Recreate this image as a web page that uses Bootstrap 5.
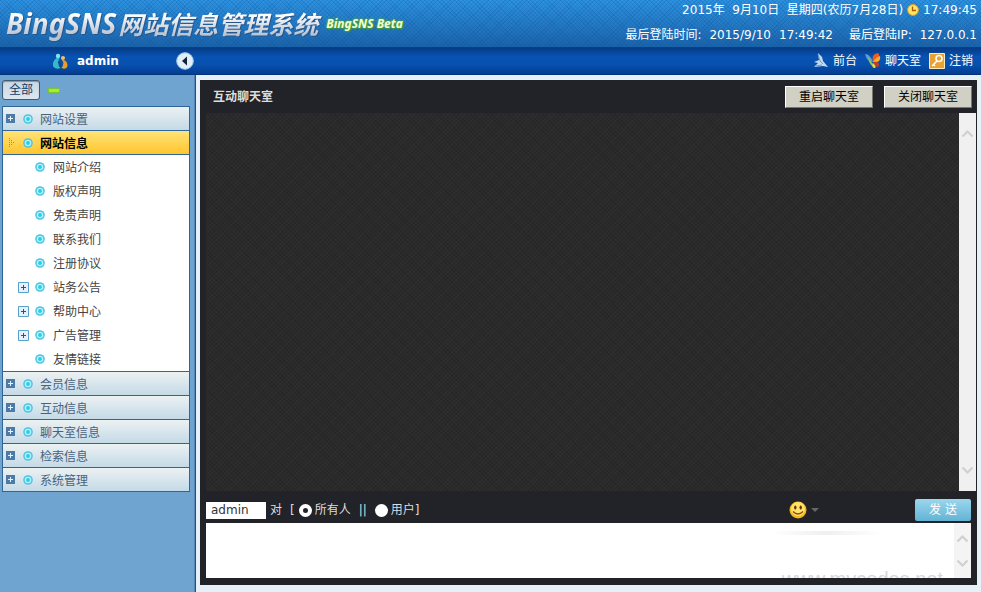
<!DOCTYPE html>
<html lang="zh-CN">
<head>
<meta charset="utf-8">
<meta name="viewport" content="width=device-width, initial-scale=1">
<title>BingSNS网站信息管理系统</title>
<link href="https://cdn.jsdelivr.net/npm/bootstrap@5.3.0/dist/css/bootstrap.min.css" rel="stylesheet">
<style>
body{font:12px/24px "DejaVu Sans","Noto Sans CJK SC",sans-serif;background:#e6f0f9;color:#333}
a,a:hover{color:inherit;text-decoration:none}
svg{display:block;flex:none}
.masthead{height:48px;border-bottom:1px solid #0b3f80;color:#fff;
 background:repeating-linear-gradient(45deg,#0a4f9e30 0 1px,transparent 1px 3px),repeating-linear-gradient(-45deg,#0a4f9e30 0 1px,transparent 1px 3px),linear-gradient(#2e93e0,#1b63a9)}
.logo{font:italic 700 25px/44px "Noto Sans","Noto Sans CJK SC",sans-serif;padding-left:6px}
.logo-name{padding-right:8px;background:linear-gradient(#fff 30%,#b9c4d2 75%);-webkit-background-clip:text;background-clip:text;color:transparent;filter:drop-shadow(1px 1px 0 #27558a)}
.logo-latin{font-size:28px;margin-right:2px}
.logo-beta{font-size:12px;color:#f2ffd8;text-shadow:0 0 2px #58b030,0 0 3px #58b030,1px 1px 1px #3c8f38}
.status{padding-right:4px}
.status-line{line-height:20px}
.status-line + .status-line{margin-top:5px}
.userbar{height:27px;background:linear-gradient(#053b86,#0853b4 35%,#0750ae 65%,#033d92);color:#fff;border-bottom:1px solid #02347c;padding-right:8px}
.userbox{width:196px;padding:0 2px 0 52px}
.side{width:196px;background:#70a4d0;border-right:1px solid #1d5288;box-shadow:inset -1px 0 #5488b8;padding:5px 5px 0 2px}
.all-btn{width:38px;height:20px;line-height:17px;padding:0;font-size:12px;color:#123c66;background:linear-gradient(#cbd7e2,#dce6ee);border:1px solid #3f5a74;border-radius:3px;box-shadow:inset 0 1px 1px #8593a0}
.dash{width:12px;height:5px;background:#a4ee30;border:1px solid #7cc23a;padding:0}
.tree{margin-top:6px;border:1px solid #2f6696;background:#fff}
.tree ul{margin:0;padding:0;list-style:none}
.group{height:24px;border-bottom:1px solid #2f6696;background:linear-gradient(#ecf1f2,#c4dae7);color:#47637d;padding-left:3px}
.group.on{background:linear-gradient(#ffe476,#ffc52f);color:#000;font-weight:700}
.tree > li:last-child .group{border:0;height:23px}
.sub{height:24px;padding-left:15px;color:#444}
.subs{border-bottom:1px solid #2f6696}
.toggle-slot{width:13px}
.label-sub{padding-left:8px;padding-top:2px}
.label-top{padding-left:7px;padding-top:2px}
.stage{padding:5px 4px 7px}
.panel{background:#222328;color:#ddd}
.panel-head{height:33px;padding:0 5px 0 13px}
.grey-btn{width:88px;height:22px;padding:0;font-size:12px;line-height:20px;color:#000;background:#d1d0c5;border:1px solid;border-color:#fff #77776f #77776f #fff;border-radius:0}
.grey-btn + .grey-btn{margin-left:11px}
.chat{margin-left:6px;background:repeating-linear-gradient(45deg,#00000018 0 1px,transparent 1px 3px),repeating-linear-gradient(-45deg,#ffffff05 0 1px,transparent 1px 3px),#2a2a2a}
.rail{width:17px;background:#f0f0f0;padding:17px 0}
.chat + .rail{margin-right:1px}
.tools{height:32px;padding:6px 6px 0;line-height:18px}
.name{width:60px;height:17px;padding:0 5px;border:0;background:#fff;color:#333;font-size:12px}
.pick{appearance:none;width:13px;height:13px;margin:0 3px 0 0;border-radius:50%;background:#fff}
.pick:checked{background:#222328;border:4px solid #fff}
.emoji{margin-right:96px}
.send{width:56px;height:22px;padding:0;border:0;border-radius:2px;font-size:12px;line-height:22px;color:#fff;background:linear-gradient(#9bd7ec,#62b3d5);white-space:pre}
.compose{height:55px;margin:0 6px 7px;background:#fff}
.compose textarea{border:0;resize:none;outline:0;font-size:12px;color:#333;padding:4px}
.compose .rail{background:#f4f4f4;padding:12px 0 11px}
.ghost{right:28px;bottom:0;height:10px;overflow:hidden;color:#d8d8d8;font:20px/22px "Liberation Sans",sans-serif}
.smudge{right:90px;top:8px;width:110px;height:4px;background:linear-gradient(90deg,transparent,#f1efed,transparent)}
</style>
<script src="https://cdn.jsdelivr.net/npm/bootstrap@5.3.0/dist/js/bootstrap.bundle.min.js"></script>
</head>
<body class="vh-100 d-flex flex-column overflow-hidden">
<svg width="0" height="0" class="position-absolute">
 <symbol id="dot" viewBox="0 0 10 10"><circle cx="5" cy="5" r="4.8" fill="#56c1df"/><circle cx="5" cy="5" r="3.3" fill="#b2f2fb"/><circle cx="5" cy="5" r="1.9" fill="#21cfe8"/></symbol>
 <symbol id="plus" viewBox="0 0 9 9"><path fill="#4d7ba5" d="M0 0h9v9H0z"/><path stroke="#e8f4ff" d="M2 4.5h5M4.5 2v5"/></symbol>
 <symbol id="plus2" viewBox="0 0 11 11"><path fill="#e2f1fb" stroke="#5e9fc9" d="M.5.5h10v10H.5z"/><path stroke="#145a98" stroke-width="1" d="M3 5.5h5M5.5 3v5"/></symbol>
 <symbol id="up" viewBox="0 0 13 8"><path fill="none" stroke="#d0d0d0" stroke-width="2.2" d="M1.5 6.5l5-5 5 5"/></symbol>
 <symbol id="down" viewBox="0 0 13 8"><path fill="none" stroke="#d0d0d0" stroke-width="2.2" d="M1.5 1.5l5 5 5-5"/></symbol>
</svg>

<header>
 <div class="masthead d-flex justify-content-between">
  <div class="logo d-flex align-items-center text-nowrap"><span class="logo-name"><span class="logo-latin">BingSNS</span>网站信息管理系统</span><span class="logo-beta">BingSNS Beta</span></div>
  <div class="status text-nowrap">
   <div class="status-line d-flex justify-content-end align-items-center gap-1"><span>2015年&nbsp; 9月10日&nbsp; 星期四(农历7月28日)</span>
    <svg width="12" height="12" viewBox="0 0 12 12"><circle cx="6" cy="6" r="5.4" fill="#ffe36a" stroke="#e2a413"/><path d="M5.5 2.5v4H9" fill="none" stroke="#a85b00" stroke-width="1.3"/></svg>
    <span>17:49:45</span></div>
   <div class="status-line d-flex justify-content-end align-items-center gap-2"><span>最后登陆时间:</span><span>2015/9/10</span><span>17:49:42</span><span class="ms-2">最后登陆IP:</span><span>127.0.0.1</span></div>
  </div>
 </div>
 <div class="userbar d-flex justify-content-between align-items-center">
  <div class="userbox d-flex align-items-center">
   <svg width="17" height="17" viewBox="0 0 17 17"><circle cx="6" cy="3" r="2.2" fill="#7fe2f4"/><path d="M4.500 5q-5 4-3 9 3 3 7 1-4-4-1-10z" fill="#36b9c8"/><circle cx="11" cy="5" r="2" fill="#f6c15a"/><path d="M10 7q3 3-.5 8 5 2 6-2 0-5-4-6z" fill="#ef9b25"/><path d="M6 9q3 1 2 5" stroke="#0b4d87" fill="none" stroke-width="1.500"/></svg>
   <strong class="ms-2 me-auto">admin</strong>
   <button class="btn p-0 border-0" aria-label="收起"><svg width="18" height="18" viewBox="0 0 18 18"><circle cx="9" cy="9" r="8.3" fill="#e2eff9" stroke="#9ccbed"/><path d="M11 4.500v9L6 9z" fill="#10243c"/></svg></button>
  </div>
  <nav class="d-flex align-items-center gap-2">
   <a href="#" class="d-flex align-items-center gap-1"><svg width="16" height="16" viewBox="0 0 16 16"><path d="M5 0l4 4 1 4 5 6-5-1-9 1 4-4-4-1 5-2z" fill="#c4daee"/><path d="M5 1l2 7 3 3M2 13l7-1" stroke="#6f9bc9" fill="none"/></svg>前台</a>
   <a href="#" class="d-flex align-items-center gap-1"><svg width="16" height="16" viewBox="0 0 16 16"><path d="M0 1q5 0 8 8Q2 9 0 1z" fill="#5b9be0"/><path d="M3 4l5 7 1 3Q4 12 3 4z" fill="#8ecb45"/><path d="M8 9Q6 1 13 0q4 5-5 9z" fill="#ef5a20"/><path d="M8 9q3-5 7-6 1 5-3 6z" fill="#fbab2c"/><path d="M8 9q7-1 6 4-3 3-6-4z" fill="#c23b30"/><path d="M8 10q-2 5 2 5 2-1-2-5z" fill="#f5d643"/></svg>聊天室</a>
   <a href="#" class="d-flex align-items-center gap-1"><svg width="16" height="16" viewBox="0 0 16 16"><path d="M.5.5h15v15H.5z" fill="#e8a134" stroke="#ffeab9"/><circle cx="10" cy="5.500" r="3" fill="none" stroke="#fff" stroke-width="1.600"/><path d="M8 8l-5 5M4 11l2 2" stroke="#fff" stroke-width="1.600"/></svg>注销</a>
  </nav>
 </div>
</header>

<div class="d-flex flex-grow-1">
 <aside class="side flex-shrink-0">
  <div class="d-flex align-items-center gap-2"><button class="all-btn">全部</button><button class="dash" aria-label="折叠"></button></div>
  <ul class="tree list-unstyled mb-0">
   <li><a href="#" class="group d-flex align-items-center"><svg width="9" height="9"><use href="#plus"/></svg><svg class="ms-2" width="10" height="10"><use href="#dot"/></svg><span class="label-top">网站设置</span></a></li>
   <li><a href="#" class="group on d-flex align-items-center"><svg width="9" height="11" viewBox="0 0 9 11"><path d="M3.500 1v10M5.500 3v6M7.500 5v2" stroke="#c78b18" stroke-dasharray="1 1"/></svg><svg class="ms-2" width="10" height="10"><use href="#dot"/></svg><span class="label-top">网站信息</span></a>
    <ul class="subs">
     <li><a href="#" class="sub d-flex align-items-center"><span class="toggle-slot"></span><svg class="ms-1" width="10" height="10"><use href="#dot"/></svg><span class="label-sub">网站介绍</span></a></li>
     <li><a href="#" class="sub d-flex align-items-center"><span class="toggle-slot"></span><svg class="ms-1" width="10" height="10"><use href="#dot"/></svg><span class="label-sub">版权声明</span></a></li>
     <li><a href="#" class="sub d-flex align-items-center"><span class="toggle-slot"></span><svg class="ms-1" width="10" height="10"><use href="#dot"/></svg><span class="label-sub">免责声明</span></a></li>
     <li><a href="#" class="sub d-flex align-items-center"><span class="toggle-slot"></span><svg class="ms-1" width="10" height="10"><use href="#dot"/></svg><span class="label-sub">联系我们</span></a></li>
     <li><a href="#" class="sub d-flex align-items-center"><span class="toggle-slot"></span><svg class="ms-1" width="10" height="10"><use href="#dot"/></svg><span class="label-sub">注册协议</span></a></li>
     <li><a href="#" class="sub d-flex align-items-center"><span class="toggle-slot"><svg width="11" height="11"><use href="#plus2"/></svg></span><svg class="ms-1" width="10" height="10"><use href="#dot"/></svg><span class="label-sub">站务公告</span></a></li>
     <li><a href="#" class="sub d-flex align-items-center"><span class="toggle-slot"><svg width="11" height="11"><use href="#plus2"/></svg></span><svg class="ms-1" width="10" height="10"><use href="#dot"/></svg><span class="label-sub">帮助中心</span></a></li>
     <li><a href="#" class="sub d-flex align-items-center"><span class="toggle-slot"><svg width="11" height="11"><use href="#plus2"/></svg></span><svg class="ms-1" width="10" height="10"><use href="#dot"/></svg><span class="label-sub">广告管理</span></a></li>
     <li><a href="#" class="sub d-flex align-items-center"><span class="toggle-slot"></span><svg class="ms-1" width="10" height="10"><use href="#dot"/></svg><span class="label-sub">友情链接</span></a></li>
    </ul></li>
   <li><a href="#" class="group d-flex align-items-center"><svg width="9" height="9"><use href="#plus"/></svg><svg class="ms-2" width="10" height="10"><use href="#dot"/></svg><span class="label-top">会员信息</span></a></li>
   <li><a href="#" class="group d-flex align-items-center"><svg width="9" height="9"><use href="#plus"/></svg><svg class="ms-2" width="10" height="10"><use href="#dot"/></svg><span class="label-top">互动信息</span></a></li>
   <li><a href="#" class="group d-flex align-items-center"><svg width="9" height="9"><use href="#plus"/></svg><svg class="ms-2" width="10" height="10"><use href="#dot"/></svg><span class="label-top">聊天室信息</span></a></li>
   <li><a href="#" class="group d-flex align-items-center"><svg width="9" height="9"><use href="#plus"/></svg><svg class="ms-2" width="10" height="10"><use href="#dot"/></svg><span class="label-top">检索信息</span></a></li>
   <li><a href="#" class="group d-flex align-items-center"><svg width="9" height="9"><use href="#plus"/></svg><svg class="ms-2" width="10" height="10"><use href="#dot"/></svg><span class="label-top">系统管理</span></a></li>
  </ul>
 </aside>

 <main class="stage flex-grow-1 d-flex">
  <section class="panel flex-grow-1 d-flex flex-column">
   <div class="panel-head d-flex align-items-center"><strong class="me-auto">互动聊天室</strong><button class="grey-btn">重启聊天室</button><button class="grey-btn">关闭聊天室</button></div>
   <div class="flex-grow-1 d-flex"><div class="chat flex-grow-1"></div>
    <div class="rail d-flex flex-column justify-content-between align-items-center"><svg width="13" height="8"><use href="#up"/></svg><svg width="13" height="8"><use href="#down"/></svg></div></div>
   <div class="tools d-flex align-items-center">
    <input class="name" value="admin" aria-label="昵称">
    <span class="ms-1 me-2">对</span><span class="me-1">[</span>
    <input class="pick" type="radio" name="to" id="to-all" checked><label for="to-all">所有人</label>
    <span class="mx-2">||</span>
    <input class="pick" type="radio" name="to" id="to-user"><label for="to-user">用户</label><span>]</span>
    <button class="emoji btn p-0 border-0 d-flex align-items-center ms-auto gap-1" aria-label="表情"><svg width="18" height="18" viewBox="0 0 18 18"><circle cx="9" cy="9" r="8.500" fill="#f6b51e"/><circle cx="9" cy="8" r="7" fill="#ffe26a"/><ellipse cx="6.300" cy="6.500" rx="1.200" ry="2" fill="#5d3504"/><ellipse cx="11.700" cy="6.500" rx="1.200" ry="2" fill="#5d3504"/><path d="M4 10.500q5 5 10 0" fill="none" stroke="#8b4a05" stroke-width="1.400"/></svg><svg width="8" height="4" viewBox="0 0 8 4"><path d="M0 0h8L4 4z" fill="#666"/></svg></button>
    <button class="send">发 送</button>
   </div>
   <div class="compose d-flex position-relative"><textarea class="flex-grow-1" aria-label="消息"></textarea>
    <div class="rail d-flex flex-column justify-content-between align-items-center"><svg width="13" height="8"><use href="#up"/></svg><svg width="13" height="8"><use href="#down"/></svg></div>
    <span class="smudge position-absolute pe-none"></span><span class="ghost position-absolute pe-none">www.mycodes.net</span></div>
  </section>
 </main>
</div>
</body>
</html>
